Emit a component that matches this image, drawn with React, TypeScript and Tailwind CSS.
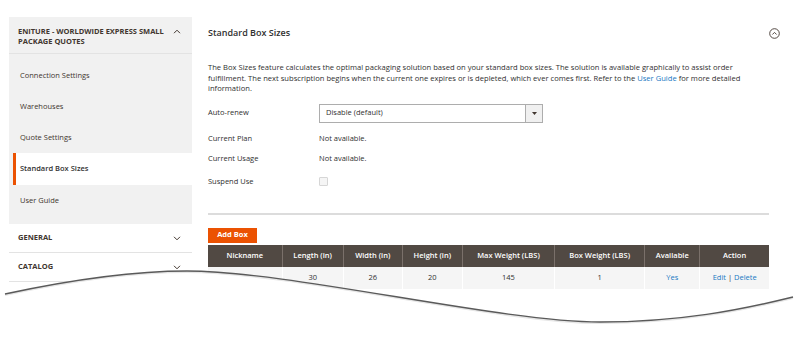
import React from 'react';

const navItems = ['Connection Settings', 'Warehouses', 'Quote Settings', 'Standard Box Sizes', 'User Guide'];

const columns = [
  { label: 'Nickname', width: 'w-[74px]', value: '' },
  { label: 'Length (in)', width: 'w-[61px]', value: '30' },
  { label: 'Width (in)', width: 'w-[59px]', value: '26' },
  { label: 'Height (in)', width: 'w-[60px]', value: '20' },
  { label: 'Max Weight (LBS)', width: 'w-[92px]', value: '145' },
  { label: 'Box Weight (LBS)', width: 'w-[90px]', value: '1' },
  { label: 'Available', width: 'w-[55px]', value: 'Yes' },
  { label: 'Action', width: 'w-[69px]', value: '' },
];

const Chevron = ({ up }: { up?: boolean }) => (
  <svg width="8" height="5" viewBox="0 0 8 5" className="shrink-0">
    <polyline
      points={up ? '1,4.2 4,1.2 7,4.2' : '1,0.8 4,3.8 7,0.8'}
      fill="none"
      stroke="#41362f"
      strokeWidth="1"
    />
  </svg>
);

export default function App() {
  return (
    <div className="relative w-[800px] h-[342px] overflow-hidden bg-white font-['Open_Sans',sans-serif] text-[#303030]">
      <div className="flex pt-[17px]">
        {/* left config nav */}
        <aside className="ml-[9px] w-[183px] shrink-0">
          <div className="bg-[#f1f1f1] pb-[8px]">
            <div className="flex items-start justify-between h-[37px] border-b border-[#e3e3e3] pl-[9px] pr-[11px] pt-[9px]">
              <div className="text-[7.5px] font-bold leading-[10px] uppercase text-[#41362f]">
                Eniture - Worldwide Express Small Package Quotes
              </div>
              <div className="pt-[3px]">
                <Chevron up />
              </div>
            </div>
            <ul className="pt-[6px]">
              {navItems.map((item) =>
                item === 'Standard Box Sizes' ? (
                  <li
                    key={item}
                    className="h-[32px] ml-[4px] flex items-center bg-white border-l-[3px] border-[#eb5202] pl-[4px] text-[7.5px] font-semibold text-[#303030]"
                  >
                    {item}
                  </li>
                ) : (
                  <li key={item} className="h-[31px] flex items-center pl-[11px] text-[7.5px] text-[#41362f]">
                    {item}
                  </li>
                )
              )}
            </ul>
          </div>
          {['GENERAL', 'CATALOG', 'CUSTOMERS'].map((s) => (
            <div
              key={s}
              className="h-[29px] flex items-center justify-between border-b border-[#e3e3e3] pl-[9px] pr-[11px] text-[7.5px] font-bold text-[#41362f]"
            >
              {s}
              <Chevron />
            </div>
          ))}
        </aside>

        {/* main content */}
        <main className="ml-[16px] w-[572px]">
          <div className="h-[32px] flex items-center justify-between">
            <h2 className="text-[9px] font-semibold text-[#303030]">Standard Box Sizes</h2>
            <svg width="11" height="11" viewBox="0 0 11 11">
              <circle cx="5.5" cy="5.5" r="4.8" fill="none" stroke="#41362f" strokeWidth="0.9" />
              <polyline points="3.4,6.5 5.5,4.4 7.6,6.5" fill="none" stroke="#41362f" strokeWidth="0.9" />
            </svg>
          </div>

          <p className="mt-[13px] w-[550px] text-[7.6px] leading-[10.5px] text-[#303030]">
            The Box Sizes feature calculates the optimal packaging solution based on your standard box sizes. The
            solution is available graphically to assist order fulfillment. The next subscription begins when the current
            one expires or is depleted, which ever comes first. Refer to the{' '}
            <a className="text-[#1979c3]">User Guide</a> for more detailed information.
          </p>

          <div className="mt-[10px] flex items-center h-[19px] text-[7.5px]">
            <div className="w-[111px]">Auto-renew</div>
            <div className="w-[224px] h-[19px] flex border border-[#adadad] bg-white">
              <div className="flex-1 flex items-center pl-[6px]">Disable (default)</div>
              <div className="w-[17px] flex items-center justify-center border-l border-[#adadad] bg-[#f0f0f0]">
                <svg width="5" height="3" viewBox="0 0 5 3">
                  <polygon points="0,0 5,0 2.5,3" fill="#41362f" />
                </svg>
              </div>
            </div>
          </div>

          <div className="mt-[6px] flex items-center h-[20px] text-[7.5px]">
            <div className="w-[111px]">Current Plan</div>
            <div>Not available.</div>
          </div>
          <div className="flex items-center h-[20px] text-[7.5px]">
            <div className="w-[111px]">Current Usage</div>
            <div>Not available.</div>
          </div>
          <div className="mt-[3px] flex items-center h-[20px] text-[7.5px]">
            <div className="w-[111px]">Suspend Use</div>
            <div className="w-[9px] h-[9px] border border-[#d6d6d6] bg-[#f5f5f5] rounded-[1px]" />
          </div>

          <div className="mt-[21px] w-[561px] h-[2px] bg-[#dcdcdc]" />

          <button className="mt-[13px] w-[49px] h-[15px] bg-[#eb5202] text-white text-[7.5px] font-bold flex items-center justify-center">
            Add Box
          </button>

          <table className="mt-[2px] w-[561px] border-collapse table-fixed text-[7.5px]">
            <thead>
              <tr className="h-[22px] bg-[#514943] text-white">
                {columns.map((c) => (
                  <th key={c.label} className={`${c.width} font-semibold border-x border-[#7a706a] first:border-l-0 last:border-r-0`}>
                    {c.label}
                  </th>
                ))}
              </tr>
            </thead>
            <tbody className="text-[#303030]">
              <tr className="h-[22px] bg-[#f5f5f5] text-center">
                {columns.map((c) => (
                  <td key={c.label} className="border-x border-white first:border-l-0 last:border-r-0">
                    {c.label === 'Available' ? (
                      <span className="text-[#1979c3]">Yes</span>
                    ) : c.label === 'Action' ? (
                      <span className="text-[#1979c3]">
                        Edit <span className="text-[#303030]">|</span> Delete
                      </span>
                    ) : (
                      c.value
                    )}
                  </td>
                ))}
              </tr>
            </tbody>
          </table>
        </main>
      </div>

      {/* torn edge of the screenshot */}
      <svg className="absolute inset-0" width="800" height="342" viewBox="0 0 800 342">
        <path
          d="M5,294 C70,280 130,271 187,271 C290,271 500,322 600,322 C680,322 740,310 793,297 L800,297 L800,342 L0,342 L0,294 Z"
          fill="#ffffff"
        />
        <path
          d="M5,295 C70,281 130,272 187,272 C290,272 500,323 600,323 C680,323 740,311 793,298"
          fill="none"
          stroke="#e6e6e6"
          strokeWidth="2"
        />
        <path
          d="M5,294 C70,280 130,271 187,271 C290,271 500,322 600,322 C680,322 740,310 793,297"
          fill="none"
          stroke="#5a5a5a"
          strokeWidth="1.4"
        />
      </svg>
    </div>
  );
}
